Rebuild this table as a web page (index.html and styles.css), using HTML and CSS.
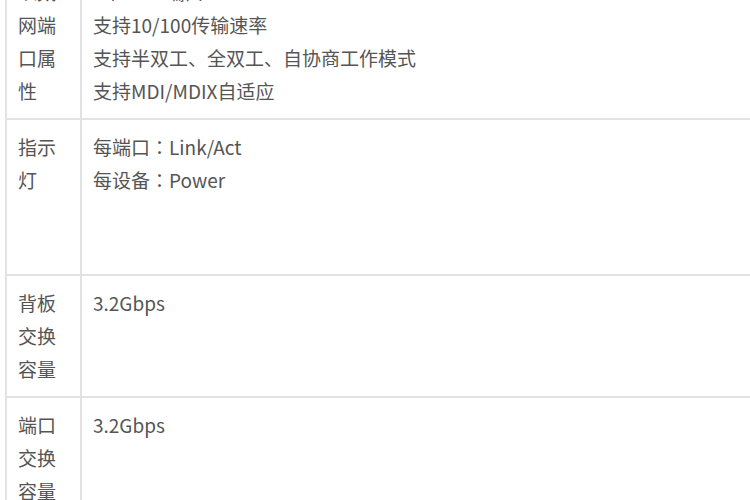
FILE: index.html
```html
<!DOCTYPE html>
<html lang="zh-CN">
<head>
<meta charset="utf-8">
<title>参数</title>
<link rel="stylesheet" href="styles.css">
</head>
<body>
<table class="spec">
  <tr>
    <td class="label">以太网端口属性</td>
    <td class="value">5个RJ45端口<br>支持10/100传输速率<br>支持半双工、全双工、自协商工作模式<br>支持MDI/MDIX自适应</td>
  </tr>
  <tr class="tall">
    <td class="label">指示灯</td>
    <td class="value">每端口<span class="colon" lang="zh-TW">：</span>Link/Act<br>每设备<span class="colon" lang="zh-TW">：</span>Power</td>
  </tr>
  <tr>
    <td class="label">背板交换容量</td>
    <td class="value">3.2Gbps</td>
  </tr>
  <tr>
    <td class="label">端口交换容量</td>
    <td class="value">3.2Gbps</td>
  </tr>
</table>
</body>
</html>
```

FILE: styles.css
```css
html, body {
  margin: 0;
  padding: 0;
  background: #fff;
  overflow: hidden;
}
.spec {
  border-collapse: separate;
  border-spacing: 0;
  border-left: 2px solid #e2e2e2;
  margin: -35px 0 0 5px;
  width: 760px;
  font-family: "Noto Sans CJK SC", "Noto Sans", sans-serif;
  font-size: 19px;
  line-height: 33px;
  color: #555;
}
.spec td {
  vertical-align: top;
  padding: 10px 11px 11px 11px;
  border-bottom: 2px solid #e2e2e2;
}
.spec td.label {
  width: 75px;
  box-sizing: border-box;
  border-right: 2px solid #e2e2e2;
  word-break: break-all;
}
.tall td {
  height: 133px;
}
.colon {
  font-family: "Noto Sans CJK TC", "Noto Sans CJK SC", sans-serif;
}
```
